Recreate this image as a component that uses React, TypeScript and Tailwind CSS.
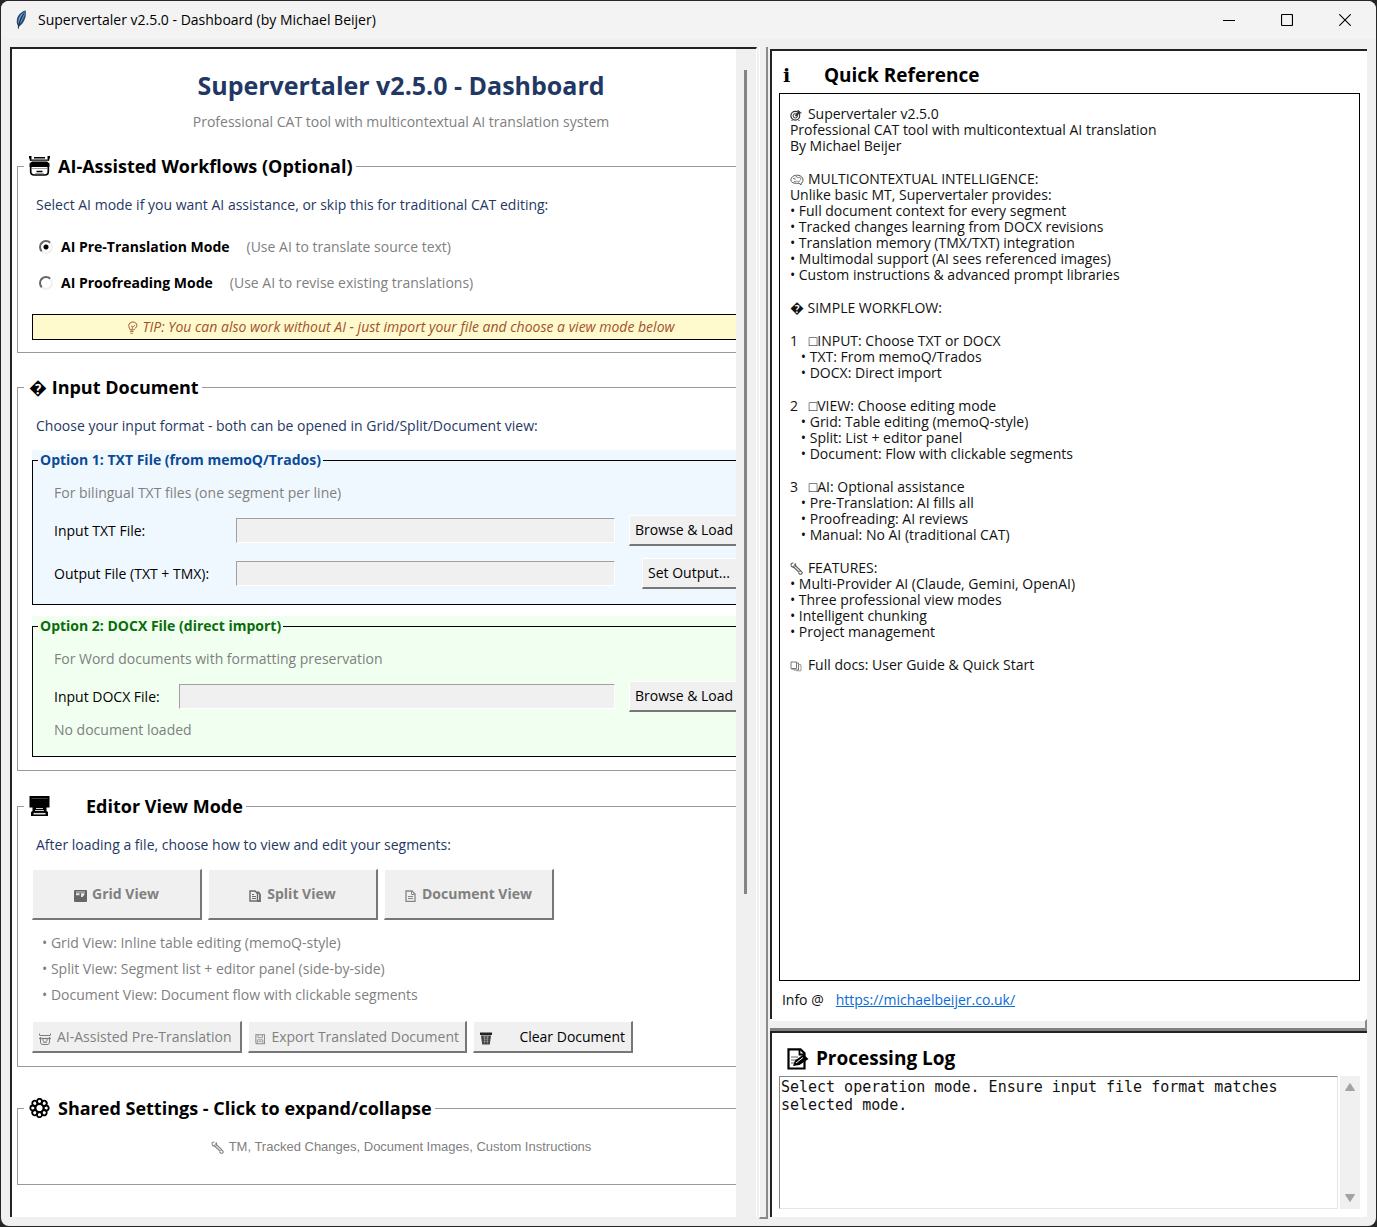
import React, { useState } from 'react';

type IconProps = { className?: string };

function FeatherIcon({ className }: IconProps) {
  return (
    <svg viewBox="0 0 12 20" className={className} aria-hidden="true">
      <path d="M10.6.6C7.5 1 3 4.500 2 9c-.6 2.700-.2 5 .8 6.600L3 19.400l1-3C7 15 9.800 10.500 10.600 6.500c.4-2.200.4-4.400 0-5.900z" fill="#2b4a6b" />
      <path d="M9.800 1.800C7 3 4.200 6 3.400 10c-.3 1.800-.2 3.200.1 4.500C4.500 10 6.500 5.500 9.800 1.800z" fill="#6ba0d8" />
      <path d="M10 2C9 5 7.500 9.500 5 13" stroke="#5b8fc4" strokeWidth="1.200" fill="none" />
      <path d="M9.600 2.500C7 6 4.600 10.500 3.300 18.500" stroke="#14202e" strokeWidth=".7" fill="none" />
    </svg>
  );
}

function RobotIcon({ className }: IconProps) {
  return (
    <svg viewBox="0 0 21 20" className={className} aria-hidden="true" fill="none">
      <rect x="0" y="0" width="2.500" height="2.500" fill="currentColor" />
      <rect x="18.500" y="0" width="2.500" height="2.500" fill="currentColor" />
      <path d="M1.500 2v2.500M19.500 2v2.500M5 1.700h11" stroke="currentColor" strokeWidth="1.600" />
      <path d="M1 4.200h19" stroke="currentColor" strokeWidth="1.300" />
      <path d="M3 5.500h15l2.500 2V11h-20V7.500z" fill="currentColor" />
      <path d="M1.700 10v5.500c0 2.300 1 3.500 3.500 3.500h10.600c2.500 0 3.500-1.200 3.500-3.500V10" stroke="currentColor" strokeWidth="1.700" />
      <path d="M7.500 15.500h6" stroke="currentColor" strokeWidth="1.600" />
      <path d="M3 12.500h15M6 17.500h9" stroke="#888" strokeWidth=".8" />
    </svg>
  );
}

function MonitorIcon({ className }: IconProps) {
  return (
    <svg viewBox="0 0 21 20" className={className} aria-hidden="true">
      <path d="M.5 0h20v11.500h-20z" fill="currentColor" />
      <path d="M2.500 2.500h16" stroke="#555" strokeWidth=".8" />
      <path d="M3.500 11h14v4l1.500 1v4H2v-4l1.500-1z" fill="currentColor" />
      <path d="M7 12.500h7M6 14.500h9" stroke="#ccc" strokeWidth="1" />
      <path d="M4.500 17.700h12" stroke="#ddd" strokeWidth="1.600" />
    </svg>
  );
}

function GearIcon({ className }: IconProps) {
  const lobes = [0, 45, 90, 135, 180, 225, 270, 315];
  return (
    <svg viewBox="0 0 21 20" className={className} aria-hidden="true" fill="none" stroke="currentColor" strokeWidth="1.800">
      {lobes.map((a) => (
        <circle key={a} cx="10.500" cy="3.300" r="2.500" transform={`rotate(${a} 10.500 10)`} />
      ))}
      <circle cx="10.500" cy="10" r="3.800" strokeWidth="1.400" />
    </svg>
  );
}

function MemoIcon({ className }: IconProps) {
  return (
    <svg viewBox="0 0 22 22" className={className} aria-hidden="true" fill="none">
      <path d="M1.500 1.300h12l4 4v15.200h-16z" stroke="#000" strokeWidth="2.200" fill="#fff" />
      <path d="M12.500 1v5.500h5" stroke="#000" strokeWidth="1.800" />
      <path d="M4 9h7M4 12h6M4 15h3" stroke="#999" strokeWidth="1.300" />
      <path d="M6 18l2-5.500 8.500-6L21.500 11l-9 6z" fill="#000" />
      <path d="M9 15l7-5.500" stroke="#fff" strokeWidth="1" />
    </svg>
  );
}

function BulbIcon({ className }: IconProps) {
  return (
    <svg viewBox="0 0 11 13" className={className} aria-hidden="true" fill="none" stroke="currentColor">
      <path d="M3.500 9C2.500 7.500 1.800 6.200 1.800 4.600 1.800 2.400 3.600 1 5.900 1s4 1.500 4 3.500C9.900 6.500 7.500 7.500 6.500 9z" />
      <path d="M4 5l2 1 2-2M5.500 6L5 9M3 10.500h3.500M3.300 12.300h2.500" strokeWidth=".8" />
    </svg>
  );
}

function GridIcon({ className }: IconProps) {
  return (
    <svg viewBox="0 0 13 12" className={className} aria-hidden="true">
      <rect x="0" y="0" width="13" height="12" rx="1" fill="#666" />
      <path d="M2 2h9" stroke="#bbb" strokeWidth="1.200" />
      <path d="M2 3.300h3.500v2H2zM7 3.300h3.500v1.500L8.500 7H7z" fill="#e8e8e8" />
    </svg>
  );
}

function PagesIcon({ className }: IconProps) {
  return (
    <svg viewBox="0 0 12 12" className={className} aria-hidden="true" fill="none" stroke="#6b6b6b">
      <path d="M1 1h5l2.500 2.500V11H1z" strokeWidth="1.400" />
      <path d="M7.500 2.500h2l1.500 2V11H8.500" strokeWidth="1.800" />
      <path d="M3 4.500h2M3 6.500h4M3 8.500h4" />
    </svg>
  );
}

function PageIcon({ className }: IconProps) {
  return (
    <svg viewBox="0 0 11 12" className={className} aria-hidden="true" fill="none" stroke="#868686">
      <path d="M1 1h6l3 3v7.500H1z" strokeWidth="1.300" />
      <path d="M6.500 1v3.500H10M3 6.500h5M3 8.500h5" />
    </svg>
  );
}

function SmallRobotIcon({ className }: IconProps) {
  return (
    <svg viewBox="0 0 12 12" className={className} aria-hidden="true" fill="none" stroke="#7d7d7d">
      <path d="M.5.500v2M11.500.500v2M1 2.500h10" />
      <path d="M1.500 4v5c0 1.800.8 2.500 2.500 2.500h4c1.700 0 2.500-.7 2.500-2.500V4" />
      <path d="M0 5.500h12" strokeWidth="1.200" />
      <path d="M3 7h2M7 7h2M4 9.200h4" strokeWidth="1.200" />
    </svg>
  );
}

function FloppyIcon({ className }: IconProps) {
  return (
    <svg viewBox="0 0 12 12" className={className} aria-hidden="true" fill="none" stroke="#8a8a8a">
      <path d="M1 1h10v10.500H2L1 10.500z" strokeWidth="1.200" />
      <path d="M3.500 1v3.500h5V1M3 11V7h6v4M4.500 9h3" />
    </svg>
  );
}

function BinIcon({ className }: IconProps) {
  return (
    <svg viewBox="0 0 12 13" className={className} aria-hidden="true">
      <path d="M0 .5h12v2.500H0z" fill="#222" />
      <path d="M1 3.500h10L9.800 12.500H2.200z" fill="#444" />
      <path d="M3 5h6M3.500 7.200h5M3.500 9.400h5M4.500 4v7.500M7.500 4v7.500" stroke="#aaa" strokeWidth=".6" />
    </svg>
  );
}

function WrenchIcon({ className }: IconProps) {
  return (
    <svg viewBox="0 0 13 13" className={className} aria-hidden="true" fill="none">
      <path d="M3.500 3.500l6.500 6" stroke="currentColor" strokeWidth="3.400" />
      <path d="M3.500 3.500l6.500 6" stroke="#ddd" strokeWidth="1.400" />
      <path d="M1 3.200C.8 1.500 2 .8 3.500 1M1 3.500c.8 1.700 2 2 3.400 1.500M4.800 1.500c1 .8 1 2 .3 3M8.800 10.800c0 1 1 1.700 2.200 1.400 1.200-.3 1.500-1.500.8-2.400-.6-.7-1.500-1-2.300-.6" stroke="currentColor" strokeWidth="1.100" />
    </svg>
  );
}

function TargetIcon({ className }: IconProps) {
  return (
    <svg viewBox="0 0 12 12" className={className} aria-hidden="true" fill="none" stroke="#333">
      <circle cx="5.300" cy="6.800" r="4.400" strokeWidth="1.200" />
      <circle cx="5.300" cy="6.800" r="2.200" />
      <path d="M5.500 7L10 2.500" strokeWidth="2" />
      <path d="M8 1l.5 2.700 3 .3" strokeWidth="1.200" />
      <path d="M2.500 11l-1 1M8.500 11l1 1" />
    </svg>
  );
}

function BrainIcon({ className }: IconProps) {
  return (
    <svg viewBox="0 0 14 12" className={className} aria-hidden="true" fill="none" stroke="#555">
      <path d="M1 6.500C.6 3.500 3 1.500 6.500 1.200 10 1 13 3 13 6c0 1.800-.8 3-2 3.300V11L9 9.200C6 9.600 1.800 9.500 1 6.500z" />
      <path d="M3 5c1-1.500 2.500-.5 2 .8M5.500 3c1-1 2.500 0 2.300 1.200M8.500 3.500c1.500-.5 2.800.8 2 2M4 7.500c1 .6 2.500.3 2.700-.8M7.500 7.500C8.500 8 10 7.500 10 6.500" strokeWidth=".9" />
    </svg>
  );
}

function BooksIcon({ className }: IconProps) {
  return (
    <svg viewBox="0 0 12 11" className={className} aria-hidden="true" fill="none" stroke="#777">
      <path d="M1 1h5.500v6.500H1zM6.500 2h2v7H4L3 7.500" />
      <path d="M8.500 3.500l2.500.3v6H6.500" stroke="#999" />
      <path d="M1.500 8.500h3" stroke="#aaa" />
    </svg>
  );
}

const raised = 'border-t border-l border-r-2 border-b-2 border-t-white border-l-white border-r-[#777] border-b-[#777] bg-[#f0f0f0]';

function PushButton({ className = '', disabled, children }: { className?: string; disabled?: boolean; children: React.ReactNode }) {
  return (
    <button type="button" disabled={disabled} className={`${raised} flex shrink-0 items-center whitespace-nowrap ${className}`}>
      {children}
    </button>
  );
}

function Group({ title, className = '', children }: { title: React.ReactNode; className?: string; children: React.ReactNode }) {
  return (
    <fieldset className={`min-w-0 border border-[#9a9a9a] ${className}`}>
      <legend className="ml-[6px] pr-[3px] pl-[5px]">
        <span className="flex h-[26px] items-center text-lg font-bold text-black">{title}</span>
      </legend>
      {children}
    </fieldset>
  );
}

function Entry({ id }: { id: string }) {
  return (
    <input
      id={id}
      type="text"
      readOnly
      className="h-[25px] min-w-0 flex-1 border border-t-[#a0a0a0] border-l-[#a0a0a0] border-r-white border-b-white bg-[#f0f0f0] px-1 outline-none"
    />
  );
}

function FileRow({ id, label, labelClass, children }: { id: string; label: string; labelClass: string; children: React.ReactNode }) {
  return (
    <div className="flex h-[31px] items-center text-black">
      <label htmlFor={id} className={`shrink-0 ${labelClass}`}>{label}</label>
      <Entry id={id} />
      <div className="ml-[14px] flex w-[122px] shrink-0 justify-center">{children}</div>
    </div>
  );
}

const modes = [
  { id: 'pre', label: 'AI Pre-Translation Mode', hint: '(Use AI to translate source text)' },
  { id: 'proof', label: 'AI Proofreading Mode', hint: '(Use AI to revise existing translations)' },
];

function Dashboard() {
  const [mode, setMode] = useState('pre');
  return (
    <div className="w-[778px] shrink-0 px-[5px] pt-5 text-[#808080]">
      <header className="text-center">
        <h1 className="text-[25px] leading-8 font-bold text-[#1f3864]">Supervertaler v2.5.0 - Dashboard</h1>
        <p className="mt-[11px] mb-[21px] leading-5">Professional CAT tool with multicontextual AI translation system</p>
      </header>

      <Group title={<><RobotIcon className="mr-2 h-5 w-[21px]" />AI-Assisted Workflows (Optional)</>}>
        <div className="px-[14px] pt-4 pb-3">
          <p className="mb-[14px] px-1 leading-5 text-[#1f3864]">Select AI mode if you want AI assistance, or skip this for traditional CAT editing:</p>
          {modes.map((m) => (
            <div key={m.id} className="flex h-9 items-center pl-[7px]">
              <input
                type="radio"
                name="mode"
                id={m.id}
                checked={mode === m.id}
                onChange={() => setMode(m.id)}
                className="size-[14px] shrink-0 appearance-none rounded-full border-2 border-t-[#666] border-l-[#666] border-r-[#f0f0f0] border-b-[#f0f0f0] bg-white checked:bg-[radial-gradient(circle,#000_2px,#fff_3px)]"
              />
              <label htmlFor={m.id} className="ml-2 font-bold text-black">{m.label}</label>
              <span className="ml-[17px]">{m.hint}</span>
            </div>
          ))}
          <div className="mt-[13px] flex h-[26px] items-center justify-center border border-black bg-[#fffacd] text-[#a0522d]">
            <BulbIcon className="mr-1 h-[13px] w-[11px]" />
            <em>TIP: You can also work without AI - just import your file and choose a view mode below</em>
          </div>
        </div>
      </Group>

      <Group className="mt-[21px]" title="� Input Document">
        <div className="px-[14px] pt-4 pb-[13px]">
          <p className="mb-[14px] px-1 leading-5 text-[#1f3864]">Choose your input format - both can be opened in Grid/Split/Document view:</p>
          <div className="bg-[#f0f8ff]">
            <fieldset className="border border-black">
              <legend className="ml-[5px] bg-[#f0f8ff] px-[2px] leading-5 font-bold text-[#0b4a94]">Option 1: TXT File (from memoQ/Trados)</legend>
              <div className="space-y-3 pt-[13px] pr-[18px] pb-[15px] pl-[21px]">
                <p className="leading-5">For bilingual TXT files (one segment per line)</p>
                <FileRow id="txt-in" label="Input TXT File:" labelClass="w-[182px]">
                  <PushButton className="h-[31px] w-full px-[5px]">Browse &amp; Load</PushButton>
                </FileRow>
                <FileRow id="txt-out" label="Output File (TXT + TMX):" labelClass="w-[182px]">
                  <PushButton className="h-[31px] w-24 px-[5px]">Set Output...</PushButton>
                </FileRow>
              </div>
            </fieldset>
          </div>
          <div className="mt-[11px] bg-[#f0fff0]">
            <fieldset className="border border-black">
              <legend className="ml-[5px] bg-[#f0fff0] px-[2px] leading-5 font-bold text-[#0a6b0a]">Option 2: DOCX File (direct import)</legend>
              <div className="pt-[13px] pr-[18px] pb-4 pl-[21px]">
                <p className="mb-3 leading-5">For Word documents with formatting preservation</p>
                <FileRow id="docx-in" label="Input DOCX File:" labelClass="w-[125px]">
                  <PushButton className="h-[31px] w-full px-[5px]">Browse &amp; Load</PushButton>
                </FileRow>
                <p className="mt-2 leading-5">No document loaded</p>
              </div>
            </fieldset>
          </div>
        </div>
      </Group>

      <Group className="mt-[22px]" title={<><MonitorIcon className="mr-9 h-5 w-[21px]" />Editor View Mode</>}>
        <div className="px-[14px] pt-4 pb-[13px]">
          <p className="mb-[14px] px-1 leading-5 text-[#1f3864]">After loading a file, choose how to view and edit your segments:</p>
          <div className="flex gap-[6px] font-bold">
            <PushButton disabled className="h-[51px] w-[170px] justify-center"><GridIcon className="mt-1 mr-[5px] h-3 w-[13px]" />Grid View</PushButton>
            <PushButton disabled className="h-[51px] w-[170px] justify-center"><PagesIcon className="mt-1 mr-[6px] size-3" />Split View</PushButton>
            <PushButton disabled className="h-[51px] w-[170px] justify-center"><PageIcon className="mt-1 mr-[6px] h-3 w-[11px]" />Document View</PushButton>
          </div>
          <ul className="mt-[10px] mb-[13px] px-[10px] leading-[26px]">
            <li>• Grid View: Inline table editing (memoQ-style)</li>
            <li>• Split View: Segment list + editor panel (side-by-side)</li>
            <li>• Document View: Document flow with clickable segments</li>
          </ul>
          <div className="flex gap-[6px]">
            <PushButton disabled className="h-8 w-[210px] px-[6px]"><SmallRobotIcon className="mt-1 mr-[6px] size-3" />AI-Assisted Pre-Translation</PushButton>
            <PushButton disabled className="h-8 w-[219px] px-[6px]"><FloppyIcon className="mt-1 mr-[6px] size-3" />Export Translated Document</PushButton>
            <PushButton className="h-8 w-40 justify-between px-[6px] text-black"><BinIcon className="mt-1 h-[13px] w-3" />Clear Document</PushButton>
          </div>
        </div>
      </Group>

      <Group className="mt-7" title={<><GearIcon className="mr-2 h-5 w-[21px]" />Shared Settings - Click to expand/collapse</>}>
        <div className="flex items-center justify-center px-[14px] pt-4 pb-[27px] font-['Liberation_Sans',sans-serif] text-[13px] leading-5">
          <WrenchIcon className="mr-[5px] size-[13px]" />
          TM, Tracked Changes, Document Images, Custom Instructions
        </div>
      </Group>
    </div>
  );
}

function Step({ n, title, items }: { n: number; title: string; items: string[] }) {
  const lines = [`${n}   □${title}`, ...items.map((t) => `   • ${t}`)].join('\n');
  return <p className="whitespace-pre-wrap">{lines}</p>;
}

const inlineIcon = 'inline-block align-[-2px]';

const introLines = [
  'Supervertaler v2.5.0',
  'Professional CAT tool with multicontextual AI translation',
  'By Michael Beijer',
].join('\n');

const contextLines = [
  'MULTICONTEXTUAL INTELLIGENCE:',
  'Unlike basic MT, Supervertaler provides:',
  '• Full document context for every segment',
  '• Tracked changes learning from DOCX revisions',
  '• Translation memory (TMX/TXT) integration',
  '• Multimodal support (AI sees referenced images)',
  '• Custom instructions & advanced prompt libraries',
].join('\n');

const featureLines = [
  'FEATURES:',
  '• Multi-Provider AI (Claude, Gemini, OpenAI)',
  '• Three professional view modes',
  '• Intelligent chunking',
  '• Project management',
].join('\n');

function QuickReference() {
  return (
    <section className="flex flex-1 flex-col border-t-2 border-l-2 border-[#222] bg-white px-[7px]">
      <h2 className="flex h-[42px] items-center pt-2 pl-1 text-[19px] font-bold text-black">
        <span className="w-[41px] font-['DejaVu_Serif',serif]">i</span>Quick Reference
      </h2>
      <div className="flex flex-1 flex-col gap-[17px] border border-black px-[10px] py-3 leading-4 text-[#111]">
        <p className="whitespace-pre-line"><TargetIcon className={`mr-[6px] size-3 ${inlineIcon}`} />{introLines}</p>
        <p className="whitespace-pre-line"><BrainIcon className={`mr-1 h-3 w-[14px] ${inlineIcon}`} />{contextLines}</p>
        <p>� SIMPLE WORKFLOW:</p>
        <Step n={1} title="INPUT: Choose TXT or DOCX" items={['TXT: From memoQ/Trados', 'DOCX: Direct import']} />
        <Step n={2} title="VIEW: Choose editing mode" items={['Grid: Table editing (memoQ-style)', 'Split: List + editor panel', 'Document: Flow with clickable segments']} />
        <Step n={3} title="AI: Optional assistance" items={['Pre-Translation: AI fills all', 'Proofreading: AI reviews', 'Manual: No AI (traditional CAT)']} />
        <p className="whitespace-pre-line"><WrenchIcon className={`mr-[5px] size-[13px] text-[#555] ${inlineIcon}`} />{featureLines}</p>
        <p><BooksIcon className={`mr-[6px] h-[11px] w-3 ${inlineIcon}`} />Full docs: User Guide &amp; Quick Start</p>
      </div>
      <p className="flex h-[38px] items-center gap-3 pl-[3px] text-[#111]">
        Info @ <a href="https://michaelbeijer.co.uk/" className="text-[#0a6cd6] underline">https://michaelbeijer.co.uk/</a>
      </p>
    </section>
  );
}

function ProcessingLog() {
  return (
    <section className="border-t-2 border-l-2 border-[#222] bg-white px-[7px] pb-2">
      <h2 className="flex h-[43px] items-center pt-2 pl-2 text-[19px] font-bold text-black">
        <MemoIcon className="mr-[7px] size-[22px]" />Processing Log
      </h2>
      <div className="flex h-[133px] gap-[2px]">
        <textarea
          readOnly
          aria-label="Processing Log"
          value="Select operation mode. Ensure input file format matches selected mode."
          className="min-w-0 flex-1 resize-none overflow-hidden border border-t-[#888] border-l-[#888] border-r-[#e5e5e5] border-b-[#e5e5e5] p-px font-['DejaVu_Sans_Mono',monospace] text-[15px] leading-[18px] text-[#111] outline-none"
        />
        <div className="flex w-5 flex-col items-center justify-between bg-[#f0f0f0] py-[7px] text-[#a3a3a3]">
          <svg viewBox="0 0 10 8" className="h-2 w-[10px]" aria-hidden="true"><path d="M5 .5L9.500 7.500h-9z" fill="currentColor" stroke="currentColor" strokeLinejoin="round" /></svg>
          <svg viewBox="0 0 10 8" className="h-2 w-[10px]" aria-hidden="true"><path d="M5 7.500L9.500.5h-9z" fill="currentColor" stroke="currentColor" strokeLinejoin="round" /></svg>
        </div>
      </div>
    </section>
  );
}

export default function App() {
  return (
    <div className="flex min-h-screen bg-[#262626] p-px font-['Open_Sans',sans-serif] text-sm">
      <div className="flex min-w-0 flex-1 flex-col overflow-hidden rounded-lg bg-[#f0f0f0]">
        <header className="flex h-[38px] items-center bg-[#f3f3f3] pr-[2px] text-black">
          <FeatherIcon className="mr-[11px] ml-[14px] h-5 w-3" />
          <span className="flex-1">Supervertaler v2.5.0 - Dashboard (by Michael Beijer)</span>
          <button type="button" aria-label="Minimize" className="flex h-full w-[58px] items-center justify-center">
            <svg viewBox="0 0 12 12" className="size-3" aria-hidden="true"><path d="M0 6.500h12" stroke="#000" /></svg>
          </button>
          <button type="button" aria-label="Maximize" className="flex h-full w-[58px] items-center justify-center">
            <svg viewBox="0 0 12 12" className="size-3" aria-hidden="true"><rect x=".5" y=".5" width="11" height="11" rx="1" fill="none" stroke="#000" strokeWidth="1.200" /></svg>
          </button>
          <button type="button" aria-label="Close" className="flex h-full w-[58px] items-center justify-center">
            <svg viewBox="0 0 12 12" className="size-3" aria-hidden="true"><path d="M.3.3l11.400 11.400M11.700.3L.3 11.700" stroke="#000" strokeWidth="1.100" /></svg>
          </button>
        </header>

        <div className="flex flex-1 px-[9px] pt-2 pb-[7px]">
          <main className="mb-[2px] flex min-w-0 flex-[745] border-t-2 border-r border-l-2 border-[#222] border-r-white bg-white">
            <div className="flex min-w-0 flex-1 overflow-hidden">
              <Dashboard />
            </div>
            <div className="flex w-5 shrink-0 justify-center bg-[#f0f0f0] pt-[21px]">
              <div className="h-[824px] w-[3px] bg-[#858585]" />
            </div>
          </main>
          <div className="ml-[2px] w-[9px] shrink-0 border-r-2 border-b-2 border-l border-r-[#8a8a8a] border-b-[#8a8a8a] border-l-white" />
          <div className="mt-[2px] mb-[2px] ml-[2px] flex min-w-0 flex-[598] flex-col">
            <QuickReference />
            <div className="h-3 border-t-2 border-r-2 border-b-[3px] border-t-white border-r-[#8a8a8a] border-b-[#808080]" />
            <ProcessingLog />
          </div>
        </div>
      </div>
    </div>
  );
}
